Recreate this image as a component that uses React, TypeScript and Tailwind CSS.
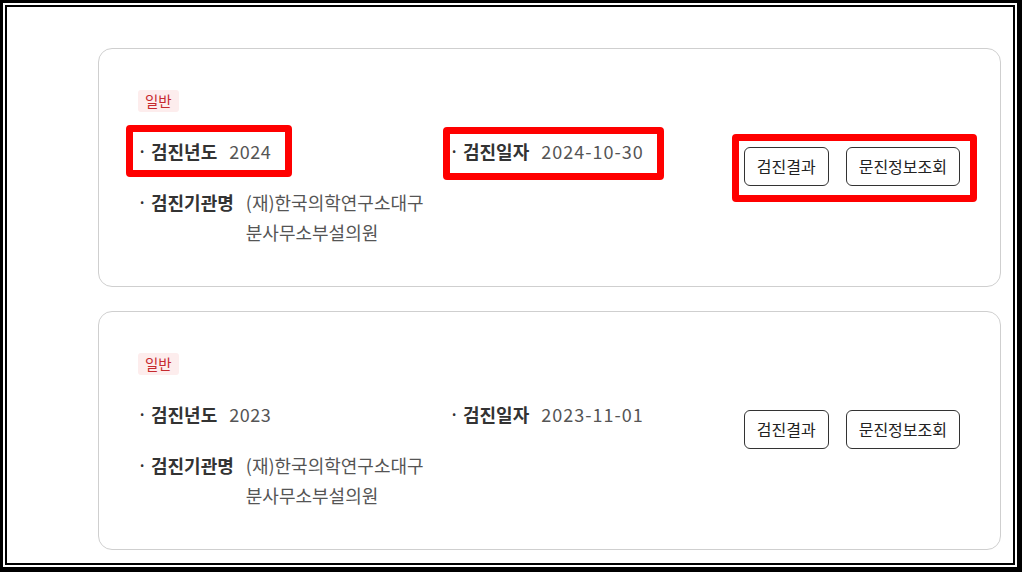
import React from "react";

type Record = {
  year: string;
  date: string;
  org: [string, string];
  marked?: boolean;
};

const records: Record[] = [
  { year: "2024", date: "2024-10-30", org: ["(재)한국의학연구소대구", "분사무소부설의원"], marked: true },
  { year: "2023", date: "2023-11-01", org: ["(재)한국의학연구소대구", "분사무소부설의원"] },
];

function Item({ label, children }: { label: string; children: React.ReactNode }) {
  return (
    <div className="flex items-start leading-[30px]">
      <span className="w-[13px] text-[#333] text-[14px] font-bold">·</span>
      <span className="font-bold text-[#333] mr-[12px] whitespace-nowrap">{label}</span>
      <div className="text-[#555]">{children}</div>
    </div>
  );
}

function RecordCard({ rec }: { rec: Record }) {
  return (
    <div className="relative flex items-center h-[239px] border border-[#cfcfcf] rounded-[14px] pl-[39px] pr-[40px] pt-[37px] pb-[40px]">
      <div className="flex-1 self-start">
        <span className="inline-block h-[22px] leading-[22px] px-[7px] rounded-[3px] bg-[#fdeded] text-[#c62a2f] text-[14.5px]">
          일반
        </span>
        <div className="mt-[23px] grid grid-cols-[312px_1fr] gap-y-[21px]">
          <Item label="검진년도">
            <span className="tracking-[0.5px]">{rec.year}</span>
          </Item>
          <Item label="검진일자">
            <span className="tracking-[1px]">{rec.date}</span>
          </Item>
          <Item label="검진기관명">
            <div>{rec.org[0]}</div>
            <div>{rec.org[1]}</div>
          </Item>
        </div>
      </div>
      <div className="flex gap-[17px]">
        <button className="h-[39px] px-[12px] border border-[#333] rounded-[6px] text-[16px] text-[#222] bg-white">
          검진결과
        </button>
        <button className="h-[39px] px-[12px] border border-[#333] rounded-[6px] text-[16px] text-[#222] bg-white">
          문진정보조회
        </button>
      </div>

      {rec.marked && (
        <>
          <div className="absolute left-[27px] top-[76px] w-[166px] h-[52px] border-[7px] border-[#ff0000] rounded-[4px] pointer-events-none" />
          <div className="absolute left-[344px] top-[78px] w-[221px] h-[53px] border-[7px] border-[#ff0000] rounded-[4px] pointer-events-none" />
          <div className="absolute left-[633px] top-[85px] w-[245px] h-[68px] border-[7px] border-[#ff0000] rounded-[4px] pointer-events-none" />
        </>
      )}
    </div>
  );
}

export default function App() {
  return (
    <div
      className="w-[1022px] h-[572px] bg-black border-t-[3px] border-l-[3px] border-r-[5px] border-b-[5px] border-black"
      style={{ fontFamily: '"Noto Sans CJK KR", "Noto Sans", sans-serif' }}
    >
      <div className="h-full bg-white p-[2px]">
        <div className="h-full border-2 border-black bg-white overflow-hidden">
          <div className="pl-[91px] pr-[12px] pt-[41px] flex flex-col gap-[24px] text-[18px]">
            {records.map((r) => (
              <RecordCard key={r.year} rec={r} />
            ))}
          </div>
        </div>
      </div>
    </div>
  );
}
